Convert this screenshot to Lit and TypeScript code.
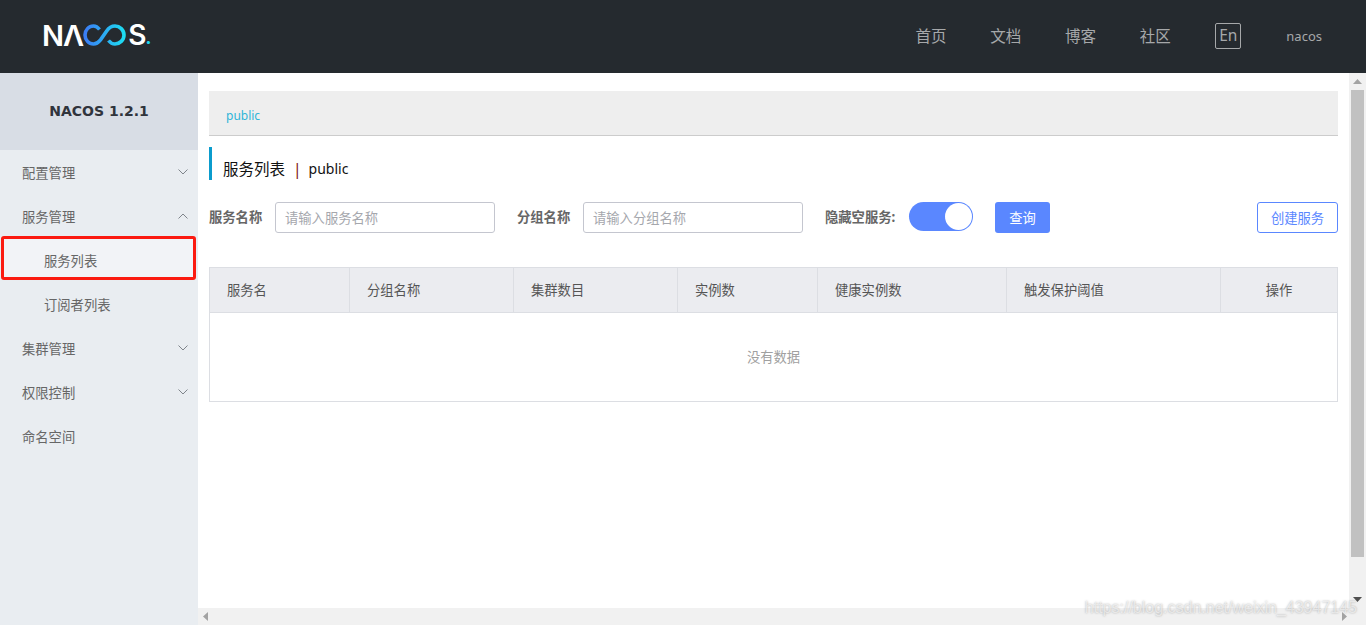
import { LitElement, html, css } from "lit";
import { customElement } from "lit/decorators.js";

const chevron = (up: boolean) => html`<svg class="chev" width="10" height="6" viewBox="0 0 10 6"><path d=${up ? "M0.5 5.500L5 1l4.500 4.500" : "M0.5 0.5L5 5l4.500-4.500"} fill="none" stroke="#7f848b" stroke-width="1"/></svg>`;

@customElement("app-root")
export class AppRoot extends LitElement {
  static styles = css`
    :host { display: block; width: 1366px; height: 625px; overflow: hidden; position: relative; font-family: "Noto Sans", "Noto Sans CJK SC", sans-serif; background: #fff; }
    .top { height: 73px; background: #252a2f; display: flex; align-items: center; padding: 0 44px; box-sizing: border-box; }
    .logo { display: flex; align-items: center; color: #fff; font-family: "Inter", sans-serif; font-weight: 600; font-size: 29px; line-height: 1; height: 28px; margin-top: -3px; }
    .logo .na { letter-spacing: -1px; margin-left: -2px; }
    .logo .s { margin-left: -1px; font-size: 28px; }
    .logo .dot { color: #1ad6ef; font-size: 20px; align-self: flex-end; margin-bottom: 2px; margin-left: -1px; }
    .nav { margin-left: auto; display: flex; align-items: center; color: #a6a8aa; font-size: 15.5px; margin-top: -2px; }
    .nav a { width: 74.7px; flex: none; }
    .en { margin-left: 1px; width: 26px; height: 26px; box-sizing: border-box; border: 1px solid #a6a8aa; border-radius: 2px; display: flex; align-items: center; justify-content: center; font-size: 15.5px; line-height: 1; }
    .user { margin-left: 45px; font-size: 13px; }
    .body { display: flex; height: 552px; }
    .side { width: 198px; flex: none; background: #e9edf1; }
    .ver { height: 77px; background: #d8dde5; display: flex; align-items: center; justify-content: center; font-family: "DejaVu Sans", sans-serif; font-weight: 700; font-size: 14px; color: #30343c; padding-bottom: 1px; box-sizing: border-box; }
    .item { height: 44px; display: flex; align-items: center; justify-content: space-between; padding: 0 10px 0 22px; font-size: 13.3px; color: #666; position: relative; }
    .item.sub { padding-left: 44px; }
    .mark { position: absolute; left: 1px; top: -2px; width: 195px; height: 44px; box-sizing: border-box; border: 3px solid #fb1a10; border-radius: 3px; background: #f2f3f7; }
    .item span { position: relative; }
    .right { flex: 1; min-width: 0; display: grid; grid-template-columns: 1fr 17px; grid-template-rows: 1fr 17px; }
    .main { padding: 18px 11px 0 11px; min-width: 0; }
    .crumb { height: 45px; box-sizing: border-box; background: #eeeeee; border-bottom: 1px solid #cccccc; padding: 16px 0 0 17px; font-size: 12px; line-height: 18px; color: #2eb5d8; }
    .title { margin-top: 11px; height: 33px; border-left: 3px solid #0b9ccd; padding: 10px 0 0 11px; box-sizing: border-box; display: flex; align-items: center; font-size: 15.5px; color: #111; }
    .title i { font-style: normal; color: #7a1010; margin: 0 7px 0 8px; }
    .title .ns { font-size: 14px; }
    .form { margin-top: 22px; display: flex; align-items: flex-start; height: 31px; }
    .label { font-size: 13.3px; font-weight: 700; color: #666; line-height: 31px; white-space: nowrap; }
    .input { width: 220px; height: 31px; box-sizing: border-box; border: 1px solid #c4c6cf; border-radius: 3px; padding-left: 9px; font-size: 13.3px; color: #a5a7ad; line-height: 31px; }
    .l1 { width: 66px; } .l2 { width: 66px; margin-left: 22px; } .l3 { width: 84px; margin-left: 22px; }
    .switch { width: 64px; height: 29px; border-radius: 15px; background: #5a87ff; position: relative; }
    .knob { position: absolute; right: 1px; top: 1px; width: 27px; height: 27px; border-radius: 50%; background: #fff; }
    .btn { height: 31px; box-sizing: border-box; border-radius: 3px; font-size: 13.3px; display: flex; align-items: center; justify-content: center; }
    .query { width: 55px; margin-left: 22px; background: #5a87ff; color: #fff; }
    .create { width: 81px; margin-left: auto; border: 1px solid #5a87ff; color: #5a87ff; background: #fff; }
    .table { margin-top: 34px; border: 1px solid #dcdee3; height: 135px; box-sizing: border-box; }
    .head { display: grid; grid-template-columns: 140px 164px 164px 140px 189px 214px 1fr; height: 45px; background: #ebecf0; border-bottom: 1px solid #dcdee3; box-sizing: border-box; }
    .head div { padding-left: 17px; font-size: 13.3px; color: #555; line-height: 44px; border-right: 1px solid #dcdee3; }
    .head div:last-child { border-right: 0; padding-left: 0; text-align: center; }
    .empty { height: 86px; display: flex; align-items: center; justify-content: center; font-size: 13.3px; color: #a0a0a0; }
    .vbar { background: #f1f1f1; display: flex; flex-direction: column; align-items: center; }
    .vthumb { width: 13px; height: 467px; background: #c1c1c1; }
    .corner, .hbar { background: #f1f1f1; }
    .arrow-box { height: 17px; display: flex; align-items: center; justify-content: center; flex: none; }
    .grow { flex: 1; }
    .hbar { display: flex; align-items: center; justify-content: space-between; padding: 0 2px 0 5px; }
    .wm { position: absolute; right: 9px; bottom: 7px; font-family: "Liberation Sans", sans-serif; font-size: 16px; line-height: 20px; color: rgba(255,255,255,.6); text-shadow: 0 0 2px rgba(90,90,90,.5); white-space: nowrap; }
  `;

  render() {
    return html`
      <div class="top">
        <div class="logo">
          <span class="na">NΛ</span>
          <svg width="46" height="22" viewBox="0 0 46 22"><defs><linearGradient id="g" x1="0" x2="1" y1="0" y2="0"><stop offset="0" stop-color="#3b7df5"/><stop offset="1" stop-color="#1ddcf2"/></linearGradient></defs><path d="M16.500 5.500C14.800 3.200 13 2 10.500 2 5.800 2 2 6 2 11s3.800 9 8.500 9c3.200 0 5-1.700 7-4.200l6-8.600C25.500 4.200 28 2 32 2c4.700 0 9 4 9 9s-4.300 9-9 9c-2.800 0-4.700-1.200-6.500-3.500" fill="none" stroke="url(#g)" stroke-width="3.600"/></svg>
          <span class="s">S</span><span class="dot">.</span>
        </div>
        <div class="nav">
          <a>首页</a><a>文档</a><a>博客</a><a>社区</a>
          <div class="en">En</div>
          <div class="user">nacos</div>
        </div>
      </div>
      <div class="body">
        <div class="side">
          <div class="ver">NACOS 1.2.1</div>
          <div class="item"><span>配置管理</span>${chevron(false)}</div>
          <div class="item"><span>服务管理</span>${chevron(true)}</div>
          <div class="item sub"><div class="mark"></div><span>服务列表</span></div>
          <div class="item sub"><span>订阅者列表</span></div>
          <div class="item"><span>集群管理</span>${chevron(false)}</div>
          <div class="item"><span>权限控制</span>${chevron(false)}</div>
          <div class="item"><span>命名空间</span></div>
        </div>
        <div class="right">
          <div class="main">
            <div class="crumb">public</div>
            <div class="title"><span>服务列表</span><i>|</i><span class="ns">public</span></div>
            <div class="form">
              <div class="label l1">服务名称</div><div class="input">请输入服务名称</div>
              <div class="label l2">分组名称</div><div class="input">请输入分组名称</div>
              <div class="label l3">隐藏空服务:</div><div class="switch"><div class="knob"></div></div>
              <div class="btn query">查询</div>
              <div class="btn create">创建服务</div>
            </div>
            <div class="table">
              <div class="head"><div>服务名</div><div>分组名称</div><div>集群数目</div><div>实例数</div><div>健康实例数</div><div>触发保护阈值</div><div>操作</div></div>
              <div class="empty">没有数据</div>
            </div>
          </div>
          <div class="vbar">
            <div class="arrow-box"><svg width="9" height="5" viewBox="0 0 9 5"><path d="M4.500 0L9 5H0z" fill="#a3a3a3"/></svg></div>
            <div class="vthumb"></div>
            <div class="grow"></div>
            <div class="arrow-box"><svg width="9" height="5" viewBox="0 0 9 5"><path d="M4.500 5L9 0H0z" fill="#505050"/></svg></div>
          </div>
          <div class="hbar">
            <svg width="5" height="9" viewBox="0 0 5 9"><path d="M5 0v9L0 4.500z" fill="#a3a3a3"/></svg>
            <svg width="5" height="9" viewBox="0 0 5 9"><path d="M0 0v9l5-4.500z" fill="#a3a3a3"/></svg>
          </div>
          <div class="corner"></div>
        </div>
      </div>
      <div class="wm">https://blog.csdn.net/weixin_43947145</div>
    `;
  }
}
